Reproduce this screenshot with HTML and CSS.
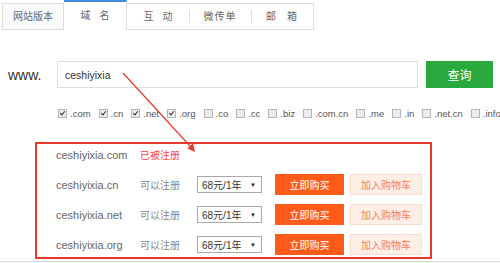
FILE: index.html
```html
<!DOCTYPE html>
<html lang="zh-CN">
<head>
  <meta charset="UTF-8">
  <title>域名查询</title>
  <link rel="stylesheet" href="styles.css">
</head>
<body>

<div class="tabs">
  <div class="tab tab-site">网站版本</div>
  <div class="tab tab-active">域 名</div>
  <div class="tab-group">
    <div class="tab">互 动</div>
    <div class="tab tab-sep">微传单</div>
    <div class="tab tab-sep">邮 箱</div>
  </div>
</div>

<div class="search">
  <span class="www">www.</span>
  <input type="text" class="search-input" value="ceshiyixia">
  <button class="btn-query">查询</button>
</div>

<div class="suffixes">
  <label class="suffix"><span class="cb checked"></span>.com</label>
  <label class="suffix"><span class="cb checked"></span>.cn</label>
  <label class="suffix"><span class="cb checked"></span>.net</label>
  <label class="suffix"><span class="cb checked"></span>.org</label>
  <label class="suffix"><span class="cb"></span>.co</label>
  <label class="suffix"><span class="cb"></span>.cc</label>
  <label class="suffix"><span class="cb"></span>.biz</label>
  <label class="suffix"><span class="cb"></span>.com.cn</label>
  <label class="suffix"><span class="cb"></span>.me</label>
  <label class="suffix"><span class="cb"></span>.in</label>
  <label class="suffix"><span class="cb"></span>.net.cn</label>
  <label class="suffix"><span class="cb"></span>.info</label>
</div>

<div class="results">
  <div class="row">
    <span class="domain">ceshiyixia.com</span>
    <span class="status taken">已被注册</span>
  </div>
  <div class="row">
    <span class="domain">ceshiyixia.cn</span>
    <span class="status">可以注册</span>
    <div class="select"><span>68元/1年</span><span class="arrow">▼</span></div>
    <button class="btn-buy">立即购买</button>
    <button class="btn-cart">加入购物车</button>
  </div>
  <div class="row">
    <span class="domain">ceshiyixia.net</span>
    <span class="status">可以注册</span>
    <div class="select"><span>68元/1年</span><span class="arrow">▼</span></div>
    <button class="btn-buy">立即购买</button>
    <button class="btn-cart">加入购物车</button>
  </div>
  <div class="row">
    <span class="domain">ceshiyixia.org</span>
    <span class="status">可以注册</span>
    <div class="select"><span>68元/1年</span><span class="arrow">▼</span></div>
    <button class="btn-buy">立即购买</button>
    <button class="btn-cart">加入购物车</button>
  </div>
</div>

<div class="bottom-line"></div>

<!-- annotation arrow drawn over the page -->
<svg class="annotation" width="500" height="263" viewBox="0 0 500 263">
  <line x1="123" y1="73" x2="190" y2="146" stroke="#e8382d" stroke-width="1.2"/>
  <polygon points="195,152 187.5,148.5 193,143" fill="#e8382d"/>
</svg>

</body>
</html>
```

FILE: styles.css
```css
body {
  margin: 0;
  width: 500px;
  height: 263px;
  overflow: hidden;
  position: relative;
  background: #fff;
  font-family: 'Liberation Sans', 'Noto Sans CJK SC', sans-serif;
  color: #666;
}

/* tabs */
.tabs {
  display: flex;
  align-items: flex-end;
  height: 30px;
  padding-left: 2px;
}

.tab {
  width: 62px;
  height: 26px;
  line-height: 26px;
  text-align: center;
  font-size: 10px;
  color: #666;
  word-spacing: 6px;
  box-sizing: border-box;
}

.tab-site {
  border: 1px solid #ddd;
  background: #fafafa;
  height: 27px;
}

.tab-active {
  width: 63px;
  height: 30px;
  line-height: 28px;
  border-top: 2px solid #3d8ee0;
  border-right: 1px solid #ddd;
  background: #fff;
}

.tab-group {
  display: flex;
  height: 27px;
  border: 1px solid #ddd;
  border-left: none;
  box-sizing: border-box;
}

.tab-group .tab {
  height: 25px;
  line-height: 25px;
  position: relative;
}

.tab-sep {
  letter-spacing: 1px;
}

.tab-sep::before {
  content: '';
  position: absolute;
  left: 0;
  top: 6px;
  height: 13px;
  border-left: 1px solid #ddd;
}

/* search */
.search {
  display: flex;
  align-items: center;
  margin-top: 31px;
  padding-left: 8px;
}

.www {
  width: 49px;
  font-size: 14px;
  color: #333;
}

.search-input {
  width: 361px;
  height: 27px;
  box-sizing: border-box;
  border: 1px solid #ddd;
  padding: 0 7px;
  font-family: inherit;
  font-size: 10.5px;
  color: #333;
  outline: none;
}

.btn-query {
  width: 67px;
  height: 27px;
  margin-left: 8px;
  border: none;
  background: #2aaa3e;
  color: #fff;
  font-family: inherit;
  font-size: 12px;
  padding: 0;
}

/* suffix checkboxes */
.suffixes {
  display: flex;
  align-items: center;
  margin-top: 19px;
  padding-left: 58px;
  height: 12px;
  white-space: nowrap;
  overflow: hidden;
}

.suffix {
  display: flex;
  align-items: center;
  margin-right: 8px;
  font-size: 9.5px;
  color: #555;
}

.cb {
  position: relative;
  width: 9px;
  height: 9px;
  margin-right: 3px;
  box-sizing: border-box;
  border: 1px solid #b5b5b5;
  background: #ececec;
}

.cb.checked::after {
  content: '';
  position: absolute;
  left: 2px;
  top: 0;
  width: 2px;
  height: 4px;
  border-right: 1.5px solid #333;
  border-bottom: 1.5px solid #333;
  transform: rotate(40deg);
}

/* results box */
.results {
  display: flex;
  flex-direction: column;
  gap: 9px;
  width: 397px;
  margin: 23px 0 0 35px;
  padding: 0 8px 2px 19px;
  box-sizing: border-box;
  border: 2px solid #e8392e;
}

.row {
  display: flex;
  align-items: center;
  height: 21px;
}

.domain {
  width: 84px;
  font-size: 11px;
  color: #666;
}

.status {
  width: 57px;
  font-size: 10px;
  color: #888;
}

.status.taken {
  color: #f2463a;
}

.select {
  display: flex;
  justify-content: space-between;
  align-items: center;
  width: 65px;
  height: 17px;
  box-sizing: border-box;
  border: 1px solid #a9a9a9;
  padding: 0 5px 0 4px;
  font-size: 10px;
  color: #333;
  margin-right: 13px;
}

.select .arrow {
  font-size: 6px;
  color: #222;
}

.btn-buy {
  width: 69px;
  height: 21px;
  margin-right: 6px;
  border: none;
  padding: 0;
  background: #fe5a1a;
  color: #fff;
  font-family: inherit;
  font-size: 10px;
}

.btn-cart {
  width: 72px;
  height: 21px;
  padding: 0;
  border: 1px solid #fadccc;
  background: #fdeee6;
  color: #f2805a;
  font-family: inherit;
  font-size: 10px;
}

.bottom-line {
  margin-top: 2px;
  height: 6px;
  border-top: 1px solid #dcdcdc;
  background: #f6f6f6;
}

.annotation {
  position: absolute;
  left: 0;
  top: 0;
  pointer-events: none;
}
```
